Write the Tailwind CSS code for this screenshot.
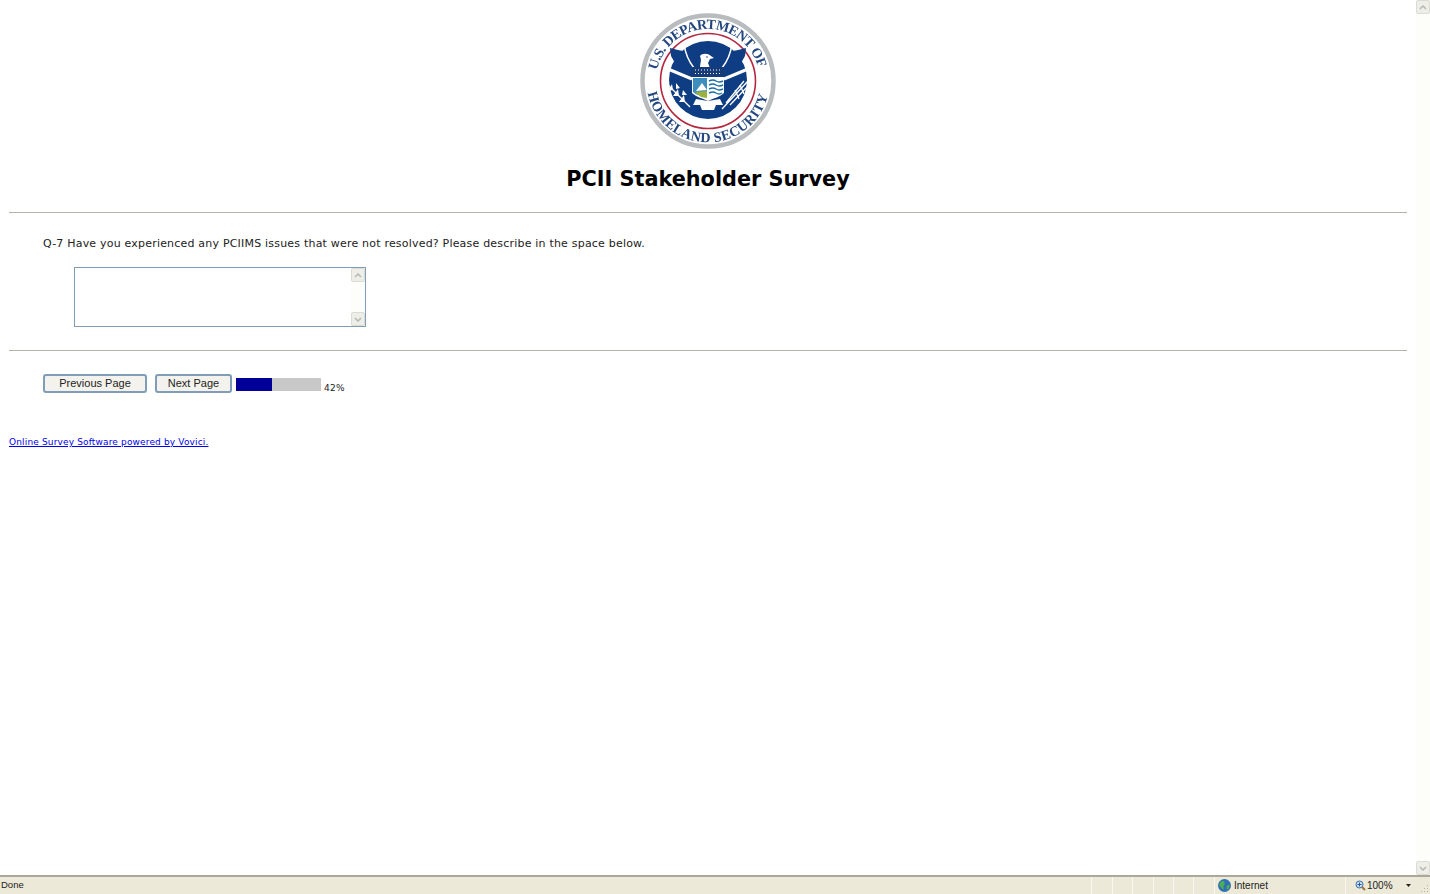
<!DOCTYPE html>
<html lang="en">
<head>
    <meta charset="UTF-8">
    <title>PCII Stakeholder Survey</title>
    <script src="https://cdn.jsdelivr.net/npm/@tailwindcss/browser@4"></script>
</head>
<body class="bg-white h-[894px] w-[1430px] overflow-hidden flex flex-col font-['DejaVu_Sans',sans-serif]">
    <div class="flex flex-1 min-h-0">
        <main class="flex-1 px-[9px] pt-[13px]">
            <div class="flex justify-center">
                <svg width="136" height="136" viewBox="0 0 136 136" class="block blur-[0.4px]">
                    <defs>
                        <path id="topArc" d="M 17.1 57.2 A 52 52 0 0 1 118.2 54.5" />
                        <path id="bottomArc" d="M 7.7 80 A 61.5 61.5 0 0 0 128.3 80" />
                    </defs>
                    <circle cx="68" cy="68" r="65.5" fill="#fff" stroke="#b9bcbe" stroke-width="4.5" />
                    <text font-family="Liberation Serif" font-size="14" font-weight="700" fill="#24477f"><textPath href="#topArc" textLength="139" lengthAdjust="spacing">U.S. DEPARTMENT OF</textPath></text>
                    <text font-family="Liberation Serif" font-size="14" font-weight="700" fill="#24477f"><textPath href="#bottomArc" textLength="166" lengthAdjust="spacing">HOMELAND SECURITY</textPath></text>
                    <circle cx="68" cy="68" r="47.5" fill="#fff" stroke="#b4283f" stroke-width="1.6" />
                    <circle cx="68" cy="67" r="39" fill="#0f3d83" />
                    <!-- wings -->
                    <path d="M30 35 L38 37 L43 38 L46 45 L52 54 L52 62 L43 56 L35 50 L31 43 Z" fill="#0f3d83" />
                    <path d="M106 35 L98 37 L93 38 L90 45 L84 54 L84 62 L93 56 L101 50 L105 43 Z" fill="#0f3d83" />
                    <path d="M44 31 Q46 45 54 55 M92 31 Q90 45 82 55" fill="none" stroke="#fff" stroke-width="1.6" />
                    <path d="M28 56 L52 66 M108 56 L84 66" stroke="#fff" stroke-width="3" />
                    <!-- head -->
                    <path d="M60 43 C62 40 68 40 71 43 L74 45 L70 46 L68 50 L70 55 L60 55 C60 50 62 48 60 43 Z" fill="#fff" />
                    <circle cx="67" cy="44" r="0.8" fill="#173a78" />
                    <!-- shield -->
                    <path d="M52 54 H84 V80 C80 84 74 85 68 88 C62 85 56 84 52 80 Z" fill="#fff" />
                    <path d="M52 54 H84 V64 H52 Z" fill="#173a78" />
                    <path d="M55 57 H81 M55 60.5 H81" stroke="#fff" stroke-width="1" stroke-dasharray="1 2" />
                    <path d="M53 65 H67 V84 C61 83 56 82 53 79 Z" fill="#3d8dbd" />
                    <path d="M56 78 L62 70 L67 77 Z" fill="#fff" />
                    <path d="M55 79 L67 78 V85 L61 84 Z" fill="#9db23e" />
                    <path d="M69 68 Q73 66 76 68 T83 68 M69 72 Q73 70 76 72 T83 72 M69 76 Q73 74 76 76 T83 76 M69 80 Q73 78 76 80 T82 80" fill="none" stroke="#1a6fa5" stroke-width="1.4" />
                    <!-- tail -->
                    <path d="M56 86 L68 88 L80 86 L83 92 L76 92 L74 97 L62 97 L60 92 L53 92 Z" fill="#fff" />
                    <!-- olive branch -->
                    <path d="M28 72 L50 94" stroke="#fff" stroke-width="1.2" />
                    <path d="M32 71 L33 77 L28 78 Z M38 76 L39 83 L33 83 Z M44 82 L45 89 L39 89 Z M36 70 L40 75 L36 76 Z M43 77 L47 82 L42 82 Z" fill="#fff" />
                    <!-- arrows -->
                    <path d="M108 68 L82 96 M104 68 L86 90 M108 73 L90 92" stroke="#fff" stroke-width="1.3" />
                    <path d="M100 72 L104 81 M95 77 L99 86" stroke="#fff" stroke-width="1.3" />
                </svg>
            </div>
            <h1 class="text-center text-[20.8px] font-bold text-black leading-[26px] mt-[17px]">PCII Stakeholder Survey</h1>
            <hr class="border-0 border-t border-[#b5b2a6] mt-[20px]" />
            <p class="text-[11px] tracking-[0.2px] leading-[14px] text-[#222] ml-[34px] mt-[24px]">Q-7 Have you experienced any PCIIMS issues that were not resolved? Please describe in the space below.</p>
            <div class="ml-[65px] mt-[16px] w-[292px] h-[60px] border border-[#7f9db9] flex justify-end">
                <div class="w-[14px] bg-[#fdfdf9] flex flex-col justify-between">
                    <div class="h-[14px] bg-[#eeeee8] border border-[#dcdcd4] rounded-[2px] flex items-center justify-center">
                        <svg width="8" height="5" viewBox="0 0 8 5"><path d="M1 4 L4 1 L7 4" fill="none" stroke="#b8b8b0" stroke-width="1.5" /></svg>
                    </div>
                    <div class="h-[14px] bg-[#eeeee8] border border-[#dcdcd4] rounded-[2px] flex items-center justify-center">
                        <svg width="8" height="5" viewBox="0 0 8 5"><path d="M1 1 L4 4 L7 1" fill="none" stroke="#b8b8b0" stroke-width="1.5" /></svg>
                    </div>
                </div>
            </div>
            <hr class="border-0 border-t border-[#b5b2a6] mt-[23px]" />
            <div class="flex items-start ml-[34px] mt-[23px]">
                <button class="w-[104px] h-[19px] border-2 border-[#7f9db9] rounded-[3px] bg-[#f3f2ec] text-[11px] leading-[15px] text-[#222] font-['Liberation_Sans',sans-serif]">Previous Page</button>
                <button class="w-[77px] h-[19px] ml-2 border-2 border-[#7f9db9] rounded-[3px] bg-[#f3f2ec] text-[11px] leading-[15px] text-[#222] font-['Liberation_Sans',sans-serif]">Next Page</button>
                <div class="w-[85px] h-[13px] bg-[#c8c8c8] ml-1 mt-[4px]">
                    <div class="h-full bg-[#000099]" style="width: 42%"></div>
                </div>
                <span class="text-[9px] tracking-[0.3px] leading-[11px] text-[#222] ml-[3px] mt-[9px]">42%</span>
            </div>
            <a href="#" class="block w-fit text-[9px] tracking-[0.15px] leading-[11px] text-[#0000ee] underline mt-[43px]">Online Survey Software powered by Vovici.</a>
        </main>
        <aside class="w-[14px] bg-[#fdfdf9] flex flex-col justify-between">
            <div class="h-[14px] bg-[#eeeee8] border border-[#dcdcd4] rounded-[2px] flex items-center justify-center">
                <svg width="8" height="5" viewBox="0 0 8 5"><path d="M1 4 L4 1 L7 4" fill="none" stroke="#b8b8b0" stroke-width="1.5" /></svg>
            </div>
            <div class="h-[14px] bg-[#eeeee8] border border-[#dcdcd4] rounded-[2px] flex items-center justify-center">
                <svg width="8" height="5" viewBox="0 0 8 5"><path d="M1 1 L4 4 L7 1" fill="none" stroke="#b8b8b0" stroke-width="1.5" /></svg>
            </div>
        </aside>
    </div>
    <footer class="h-[19px] bg-[#ece9d8] border-t-2 border-[#aca899] flex items-center text-[10px] text-[#222] font-['Liberation_Sans',sans-serif]">
        <span class="flex-1 pl-[1px] text-[9.5px]">Done</span>
        <div class="w-[21px] h-full border-l border-[#f8f7f0]"></div>
        <div class="w-[20px] h-full border-l border-[#f8f7f0]"></div>
        <div class="w-[21px] h-full border-l border-[#f8f7f0]"></div>
        <div class="w-[20px] h-full border-l border-[#f8f7f0]"></div>
        <div class="w-[20px] h-full border-l border-[#f8f7f0]"></div>
        <div class="w-[21px] h-full border-l border-[#f8f7f0]"></div>
        <div class="w-[131px] h-full border-l border-[#f8f7f0] flex items-center pl-[3px] gap-[3px]">
            <svg width="13" height="13" viewBox="0 0 12 12"><circle cx="6" cy="6" r="6" fill="#2f6fb5" /><path d="M3 2 C5 1 7 3 6 5 C4 6 6 8 5 10 C3 9 2 6 1 5 Z M8 6 L11 5 L10 9 L8 10 Z" fill="#4caf50" /></svg>
            <span>Internet</span>
        </div>
        <div class="w-[85px] h-full border-l border-[#f8f7f0] flex items-center pl-[9px] gap-[1px]">
            <svg width="11" height="11" viewBox="0 0 11 11"><circle cx="4.5" cy="4.5" r="3.5" fill="#cfe0f5" stroke="#3a6ea5" /><path d="M7 7 L10 10" stroke="#a0743c" stroke-width="2" /><path d="M2.5 4.5 H6.5 M4.5 2.5 V6.5" stroke="#1f57a8" /></svg>
            <span>100%</span>
            <svg width="5" height="3" viewBox="0 0 5 3" class="ml-[12px]"><path d="M0 0 H5 L2.5 3 Z" fill="#222" /></svg>
            <svg width="8" height="8" viewBox="0 0 8 8" class="ml-[9px] mt-[5px]"><path d="M6 1 H7 V2 H6 Z M3 4 H4 V5 H3 Z M6 4 H7 V5 H6 Z M0 7 H1 V8 H0 Z M3 7 H4 V8 H3 Z M6 7 H7 V8 H6 Z" fill="#b8b5a5" /></svg>
        </div>
    </footer>
</body>
</html>
